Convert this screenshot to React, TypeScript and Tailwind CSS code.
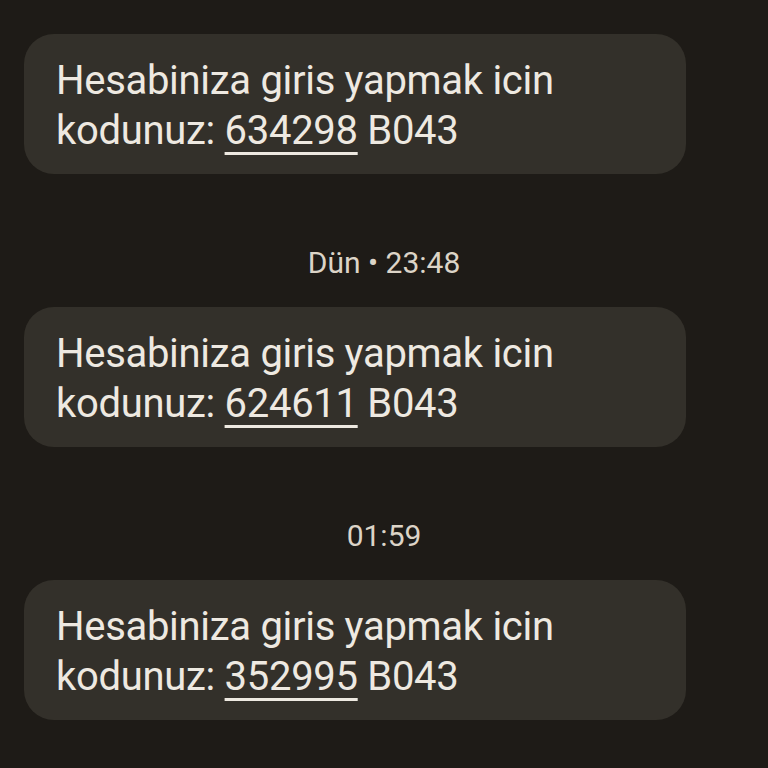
const messages = [
  { time: null, code: "634298" },
  { time: "Dün • 23:48", code: "624611" },
  { time: "01:59", code: "352995" },
];

function Bubble({ code }: { code: string }) {
  return (
    <div className="w-[662px] rounded-[30px] bg-[#33302a] pl-[32px] pr-6 pt-[22px] pb-[18px] text-[40px] leading-[50px] tracking-[-0.3px] text-[#eee9e1]">
      <div>Hesabiniza giris yapmak icin</div>
      <div>
        kodunuz:{" "}
        <span className="underline decoration-[2.5px] underline-offset-[8px]">{code}</span> B043
      </div>
    </div>
  );
}

export default function App() {
  return (
    <div
      className="h-[768px] w-[768px] overflow-hidden bg-[#1e1b17] pl-[24px] pt-[34px]"
      style={{ fontFamily: "Roboto, 'Noto Sans', sans-serif" }}
    >
      {messages.map((m, i) => (
        <div key={i}>
          {m.time && (
            <div className="mt-[70px] mb-[27px] flex h-[36px] w-[720px] items-center justify-center text-[30px] text-[#dcd4c7]">
              {m.time}
            </div>
          )}
          <Bubble code={m.code} />
        </div>
      ))}
    </div>
  );
}
